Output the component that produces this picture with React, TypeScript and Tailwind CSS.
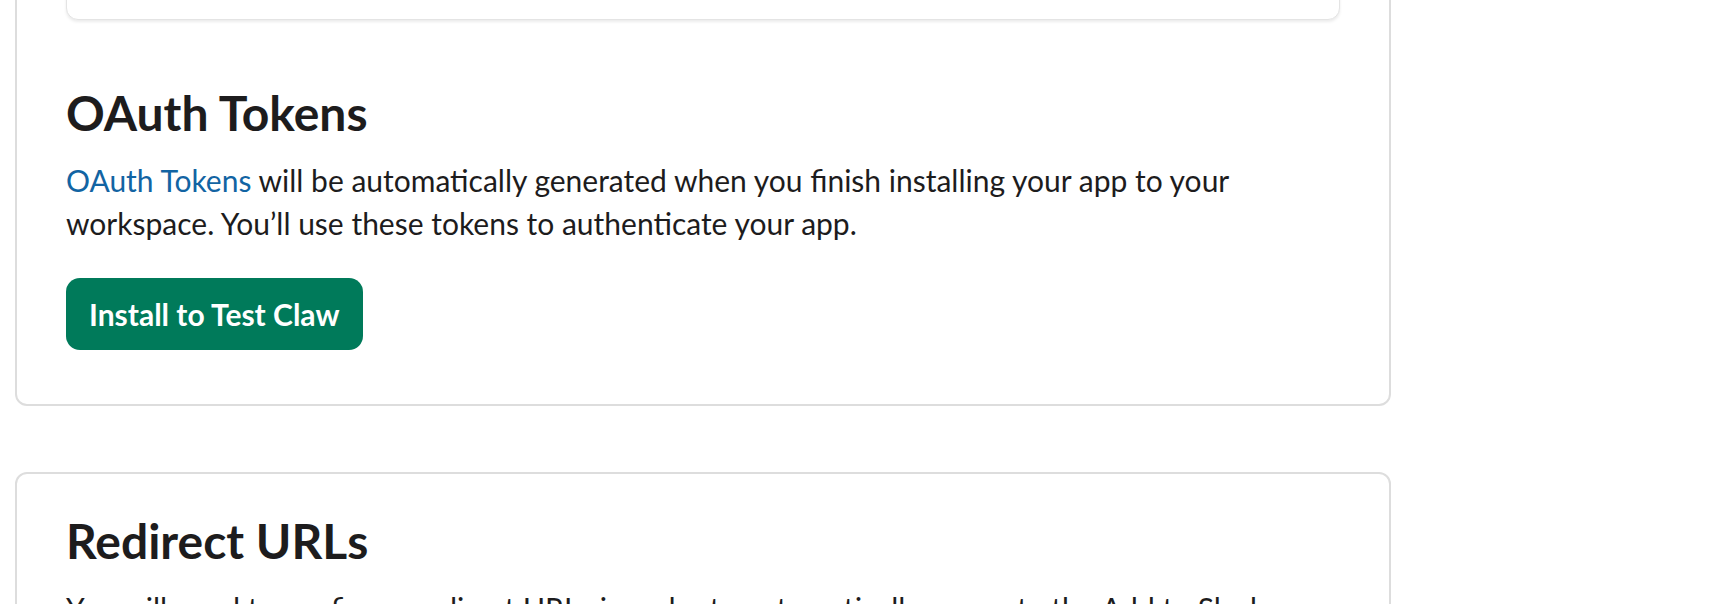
export default function App() {
  return (
    <div className="h-[604px] overflow-hidden bg-white pl-[15px] font-['Lato','Noto_Sans',sans-serif] text-[#1d1c1d]">
      <div className="-mt-[80px] w-[1376px] rounded-[12px] border-2 border-[#dddddd] px-[49px] pt-[48px] pb-[54px]">
        <div className="h-[50px] rounded-[12px] border border-[#e4e4e4] bg-white shadow-[0_2px_3px_rgba(0,0,0,0.08)]" />
        <h2 className="mt-[64px] text-[48px] font-bold leading-[58px]">OAuth Tokens</h2>
        <p className="mt-[17px] text-[30px] leading-[43px]">
          <a className="text-[#1264a3]" href="#">OAuth Tokens</a> will be automatically generated when you finish installing your app to your workspace. You’ll use these tokens to authenticate your app.
        </p>
        <button className="mt-[33px] h-[72px] rounded-[14px] bg-[#007a5a] px-[23px] text-[30px] font-bold leading-[36px] text-white">
          Install to Test Claw
        </button>
      </div>
      <div className="mt-[66px] w-[1376px] rounded-[12px] border-2 border-[#dddddd] px-[49px] pt-[38px] pb-[48px]">
        <h2 className="text-[48px] font-bold leading-[58px]">Redirect URLs</h2>
        <p className="mt-[17px] text-[30px] leading-[43px]">
          You will need to configure redirect URLs in order to automatically generate the Add to Slack button or to distribute your app. If you pass a URL in an OAuth request, it must (partially) match one of the URLs you enter here. <a className="text-[#1264a3]" href="#">Learn more</a>.
        </p>
      </div>
    </div>
  );
}
